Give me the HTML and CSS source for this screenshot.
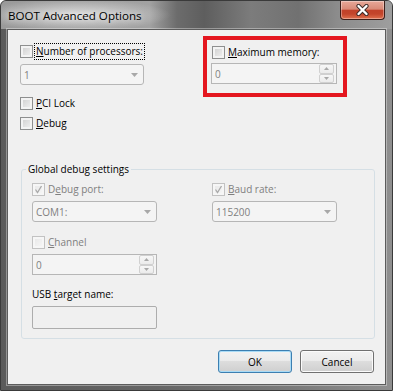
FILE: index.html
```html
<!DOCTYPE html>
<html lang="en">
<head>
  <meta charset="UTF-8" />
  <title>BOOT Advanced Options</title>
  <link rel="stylesheet" href="styles.css">
</head>
<body>
  <div class="window">
    <div class="titlebar">
      <span class="title">BOOT Advanced Options</span>
      <button class="close" title="Close">
        <svg width="13" height="12" viewBox="0 0 13 12">
          <path d="M2.5 2 L10.5 10 M10.5 2 L2.5 10" stroke="#3b2a28" stroke-width="4.2" stroke-linecap="round"/>
          <path d="M2.5 2 L10.5 10 M10.5 2 L2.5 10" stroke="#fff" stroke-width="2.4" stroke-linecap="round"/>
        </svg>
      </button>
    </div>

    <div class="client">
      <div class="top">
        <div class="col-left">
          <label class="check">
            <span class="box"></span>
            <span class="label focus"><u>N</u>umber of processors:</span>
          </label>
          <div class="combo first">
            <span>1</span>
            <svg class="arrow" width="7" height="4" viewBox="0 0 7 4"><path d="M0 0 H7 L3.5 4 Z" fill="#a8a8a8"/></svg>
          </div>
          <div class="checks">
            <label class="check">
              <span class="box"></span>
              <span class="label"><u>P</u>CI Lock</span>
            </label>
            <label class="check">
              <span class="box"></span>
              <span class="label"><u>D</u>ebug</span>
            </label>
          </div>
        </div>

        <div class="highlight">
          <label class="check">
            <span class="box"></span>
            <span class="label"><u>M</u>aximum memory:</span>
          </label>
          <div class="spin wide">
            <span>0</span>
            <span class="spin-btns">
              <span class="sb"><svg width="5" height="3" viewBox="0 0 5 3"><path d="M0 3 H5 L2.5 0 Z" fill="#a8a8a8"/></svg></span>
              <span class="sb"><svg width="5" height="3" viewBox="0 0 5 3"><path d="M0 0 H5 L2.5 3 Z" fill="#a8a8a8"/></svg></span>
            </span>
          </div>
        </div>
      </div>

      <fieldset class="group">
        <legend>Global debug settings</legend>
        <div class="group-grid">
          <div class="field">
            <label class="check off">
              <span class="box"><svg width="11" height="11" viewBox="0 0 11 11"><path d="M2.5 5.5 L4.5 8.5 L8.5 2" stroke="#a9a9a9" stroke-width="1.3" fill="none"/></svg></span>
              <span class="label">D<u>e</u>bug port:</span>
            </label>
            <div class="combo">
              <span>COM1:</span>
              <svg class="arrow" width="7" height="4" viewBox="0 0 7 4"><path d="M0 0 H7 L3.5 4 Z" fill="#a8a8a8"/></svg>
            </div>
          </div>
          <div class="field">
            <label class="check off">
              <span class="box"><svg width="11" height="11" viewBox="0 0 11 11"><path d="M2.5 5.5 L4.5 8.5 L8.5 2" stroke="#a9a9a9" stroke-width="1.3" fill="none"/></svg></span>
              <span class="label"><u>B</u>aud rate:</span>
            </label>
            <div class="combo">
              <span>115200</span>
              <svg class="arrow" width="7" height="4" viewBox="0 0 7 4"><path d="M0 0 H7 L3.5 4 Z" fill="#a8a8a8"/></svg>
            </div>
          </div>
          <div class="field">
            <label class="check off">
              <span class="box"></span>
              <span class="label"><u>C</u>hannel</span>
            </label>
            <div class="spin">
              <span>0</span>
              <span class="spin-btns">
                <span class="sb"><svg width="5" height="3" viewBox="0 0 5 3"><path d="M0 3 H5 L2.5 0 Z" fill="#a8a8a8"/></svg></span>
                <span class="sb"><svg width="5" height="3" viewBox="0 0 5 3"><path d="M0 0 H5 L2.5 3 Z" fill="#a8a8a8"/></svg></span>
              </span>
            </div>
          </div>
        </div>
        <span class="usb-label">USB <u>t</u>arget name:</span>
        <div class="textbox"></div>
      </fieldset>

      <div class="buttons">
        <button class="btn default">OK</button>
        <button class="btn">Cancel</button>
      </div>
    </div>
  </div>
</body>
</html>
```
FILE: styles.css
```css
* {
  box-sizing: border-box;
}

body {
  margin: 0;
  background: #fff;
  font-family: 'Open Sans', sans-serif;
  font-size: 10px;
  color: #000;
}

.window {
  width: 393px;
  height: 391px;
  display: flex;
  flex-direction: column;
  border: 1px solid #3a3a3a;
  border-radius: 6px 6px 0 0;
  background: linear-gradient(90deg, #5a5a5a 0%, #666 40%, #7b7b7b 75%, #8f8f8f 100%);
  overflow: hidden;
}

/* title bar */
.titlebar {
  height: 28px;
  display: flex;
  align-items: flex-start;
  padding: 0 7px;
  background:
    radial-gradient(ellipse 95px 16px at 75px 14px, rgba(230,230,230,0.9), rgba(230,230,230,0)),
    linear-gradient(90deg, #9a9a9a 0%, #a2a2a2 38%, #6c6c6c 45%, #5e5e5e 52%, #7c7c7c 64%, #717171 76%, #8c8c8c 86%, #9e9e9e 100%);
}

.title {
  padding-top: 7px;
  font-size: 11.6px;
  line-height: 15px;
  text-shadow: 0 0 6px rgba(255,255,255,0.8);
}

.close {
  margin-left: auto;
  width: 45px;
  height: 19px;
  padding: 0;
  display: flex;
  align-items: center;
  justify-content: center;
  border: 1px solid #3e1f1a;
  border-top: none;
  border-radius: 0 0 4px 4px;
  background: linear-gradient(#e8a899 0%, #d98a77 45%, #c2422a 52%, #c3452b 72%, #e0714f 100%);
  box-shadow: inset 0 0 0 1px rgba(255,255,255,0.35);
}

/* dialog body */
.client {
  flex: 1;
  margin: 0 6px 5px 6px;
  padding: 6px 10px 0 12px;
  border: 1px solid #5c5c5c;
  background: #f0f0f0;
  box-shadow: 0 0 0 1px rgba(255,255,255,0.35);
}

.top {
  display: flex;
}

.col-left {
  width: 183px;
  padding-top: 7px;
}

.highlight {
  width: 144px;
  height: 61px;
  padding: 4px 0 0 4px;
  border: 4px solid #e4161f;
}

.highlight .check {
  margin-left: 1px;
}

.checks {
  display: flex;
  flex-direction: column;
  gap: 3px;
  margin-top: 10px;
}

.check {
  display: flex;
  align-items: center;
  height: 17px;
}

.box {
  width: 13px;
  height: 13px;
  flex: none;
  margin-right: 1px;
  display: flex;
  align-items: center;
  justify-content: center;
  border: 1px solid #8e8f8f;
  background: linear-gradient(135deg, #cdcdcd, #f3f3f3);
  box-shadow: inset 0 0 0 2px #f3f3f3;
}

.label {
  padding: 0 1px;
  line-height: 15px;
  border: 1px solid transparent;
}

.label.focus {
  border: 1px dotted #000;
}

.off .box {
  border-color: #c2c2c2;
  background: linear-gradient(135deg, #e6e6e6, #f8f8f8);
  box-shadow: inset 0 0 0 2px #f6f6f6;
}

.off .label {
  color: #7f7f7f;
}

u {
  text-underline-offset: 1px;
}

/* disabled inputs */
.combo {
  width: 125px;
  height: 21px;
  display: flex;
  align-items: center;
  padding: 0 5px 0 3px;
  border: 1px solid #b6b6b6;
  border-radius: 3px;
  background: #f4f4f4;
  color: #7f7f7f;
}

.combo.first {
  width: 124px;
  margin-top: 4px;
}

.field .combo,
.field .spin {
  margin-top: 3px;
}

.arrow {
  margin-left: auto;
}

.spin {
  width: 125px;
  height: 21px;
  display: flex;
  align-items: center;
  padding: 0 2px 0 3px;
  border: 1px solid #b6b6b6;
  background: #f4f4f4;
  color: #7f7f7f;
}

.spin.wide {
  width: 126px;
  margin-top: 2px;
}

.spin-btns {
  margin-left: auto;
  width: 15px;
  height: 19px;
  display: flex;
  flex-direction: column;
}

.sb {
  flex: 1;
  display: flex;
  align-items: center;
  justify-content: center;
  border: 1px solid #d0d0d0;
  border-radius: 2px;
  background: linear-gradient(#f7f7f7, #ebebeb);
}

/* group box */
.group {
  width: 354px;
  margin: 31px 0 0 1px;
  padding: 5px 10px 9px 10px;
  border: 1px solid #d5dfe5;
  border-radius: 3px;
}

.group legend {
  margin-left: -6px;
  padding: 0 2px;
  line-height: 13px;
}

.group-grid {
  display: grid;
  grid-template-columns: 180px 125px;
  row-gap: 12px;
}

.usb-label {
  display: block;
  margin-top: 13px;
  line-height: 13px;
}

.textbox {
  width: 125px;
  height: 23px;
  margin-top: 5px;
  border: 1px solid #adadad;
  border-radius: 2px;
  background: #f0f0f0;
}

/* buttons */
.buttons {
  display: flex;
  justify-content: flex-end;
  gap: 8px;
  margin: 11px 1px 0 0;
}

.btn {
  width: 74px;
  height: 23px;
  padding: 0;
  font-family: inherit;
  font-size: 10px;
  color: #000;
  border: 1px solid #707070;
  border-radius: 3px;
  background: linear-gradient(#f2f2f2 0%, #ebebeb 45%, #dddddd 50%, #cfcfcf 100%);
  box-shadow: inset 0 0 0 1px #fbfbfb;
}

.btn.default {
  border-color: #3c7fb1;
  box-shadow: inset 0 0 0 1px #a9dbf6;
}
```
